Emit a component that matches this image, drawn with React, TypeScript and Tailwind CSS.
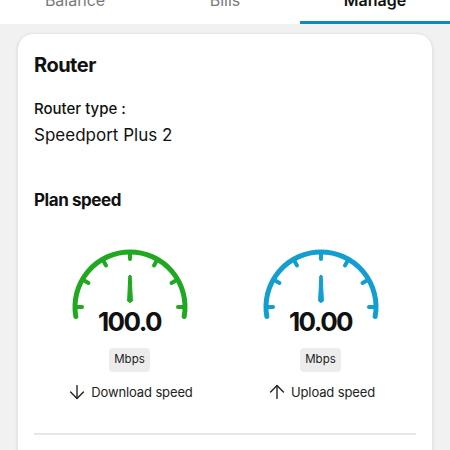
import { ArrowDown, ArrowUp } from 'lucide-react'

interface Velocidad {
  valor: string
  color: string
  etiqueta: string
  subida: boolean
}

const velocidades: Velocidad[] = [
  { valor: '100.0', color: '#20a820', etiqueta: 'Download speed', subida: false },
  { valor: '10.00', color: '#129fd0', etiqueta: 'Upload speed', subida: true },
]

// Velocímetro: arco de 200° con 7 marcas y aguja central
function Gauge({ color }: { color: string }) {
  const cx = 60
  const cy = 59
  const r = 55
  const punto = (ang: number, radio: number) => {
    const a = (ang * Math.PI) / 180
    return [cx + radio * Math.cos(a), cy - radio * Math.sin(a)]
  }
  const [x1, y1] = punto(190, r)
  const [x2, y2] = punto(-10, r)
  const marcas = [0, 30, 60, 90, 120, 150, 180]

  return (
    <svg width="120" height="72" viewBox="0 0 120 72">
      <path
        d={`M ${x1} ${y1} A ${r} ${r} 0 1 1 ${x2} ${y2}`}
        fill="none"
        stroke={color}
        strokeWidth="5"
        strokeLinecap="round"
      />
      {marcas.map(m => {
        const [ax, ay] = punto(m, r)
        const [bx, by] = punto(m, r - 7)
        return (
          <line key={m} x1={ax} y1={ay} x2={bx} y2={by} stroke={color} strokeWidth="4" strokeLinecap="round" />
        )
      })}
      <path
        d={`M ${cx - 1.2} 28 Q ${cx} 26 ${cx + 1.2} 28 L ${cx + 2.4} 53 Q ${cx} 56 ${cx - 2.4} 53 Z`}
        fill={color}
        stroke={color}
        strokeWidth="1"
        strokeLinejoin="round"
      />
    </svg>
  )
}

export default function App() {
  return (
    <main className="w-[450px] h-[450px] overflow-hidden bg-[#f1f1f1] font-['Inter',sans-serif] text-[#111]">
      {/* Pestañas */}
      <div className="flex h-[24px] bg-white overflow-hidden">
        <div className="w-1/3 flex items-end justify-center pb-[11px] border-b-[3px] border-transparent text-[16px] leading-[20px] text-[#7a7a7a]">
          Balance
        </div>
        <div className="w-1/3 flex items-end justify-center pb-[11px] border-b-[3px] border-transparent text-[16px] leading-[20px] text-[#7a7a7a]">
          Bills
        </div>
        <div className="w-1/3 flex items-end justify-center pb-[11px] border-b-[3px] border-[#1389b8] text-[16px] leading-[20px] font-semibold text-[#111]">
          Manage
        </div>
      </div>

      <div className="px-[17px] pt-[9px]">
        <div className="bg-white rounded-[16px] border border-[#e6e6e6] shadow-sm px-[16px] pt-[17px] h-[440px]">
          <h2 className="text-[20px] leading-[28px] font-bold tracking-tight">Router</h2>

          <p className="mt-[19.5px] text-[15px] leading-[20px] font-medium">Router type :</p>
          <p className="mt-[4.5px] text-[17px] leading-[24px]">Speedport Plus 2</p>

          <h3 className="mt-[41px] text-[17px] leading-[24px] font-bold tracking-tight">Plan speed</h3>

          <div className="grid grid-cols-2 mt-[36px]">
            {velocidades.map(v => (
              <div key={v.etiqueta} className="flex flex-col items-center">
                <Gauge color={v.color} />
                <div className="-mt-[11.5px] text-[26px] leading-[26px] font-bold tracking-[-0.06em]">
                  {v.valor}
                </div>
                <div className="mt-[13.5px] h-[24px] px-[5px] flex items-center rounded-[4px] bg-[#ececec] text-[11.5px] text-[#222]">
                  Mbps
                </div>
                <div className="mt-[9px] flex items-center gap-[3px] text-[13px] leading-[20px] tracking-[-0.01em] text-[#222]">
                  {v.subida ? (
                    <ArrowUp size={22} strokeWidth={1.5} />
                  ) : (
                    <ArrowDown size={22} strokeWidth={1.5} />
                  )}
                  <span>{v.etiqueta}</span>
                </div>
              </div>
            ))}
          </div>

          <div className="mt-[30px] h-[2px] bg-[#e6e6e6]" />
        </div>
      </div>
    </main>
  )
}
